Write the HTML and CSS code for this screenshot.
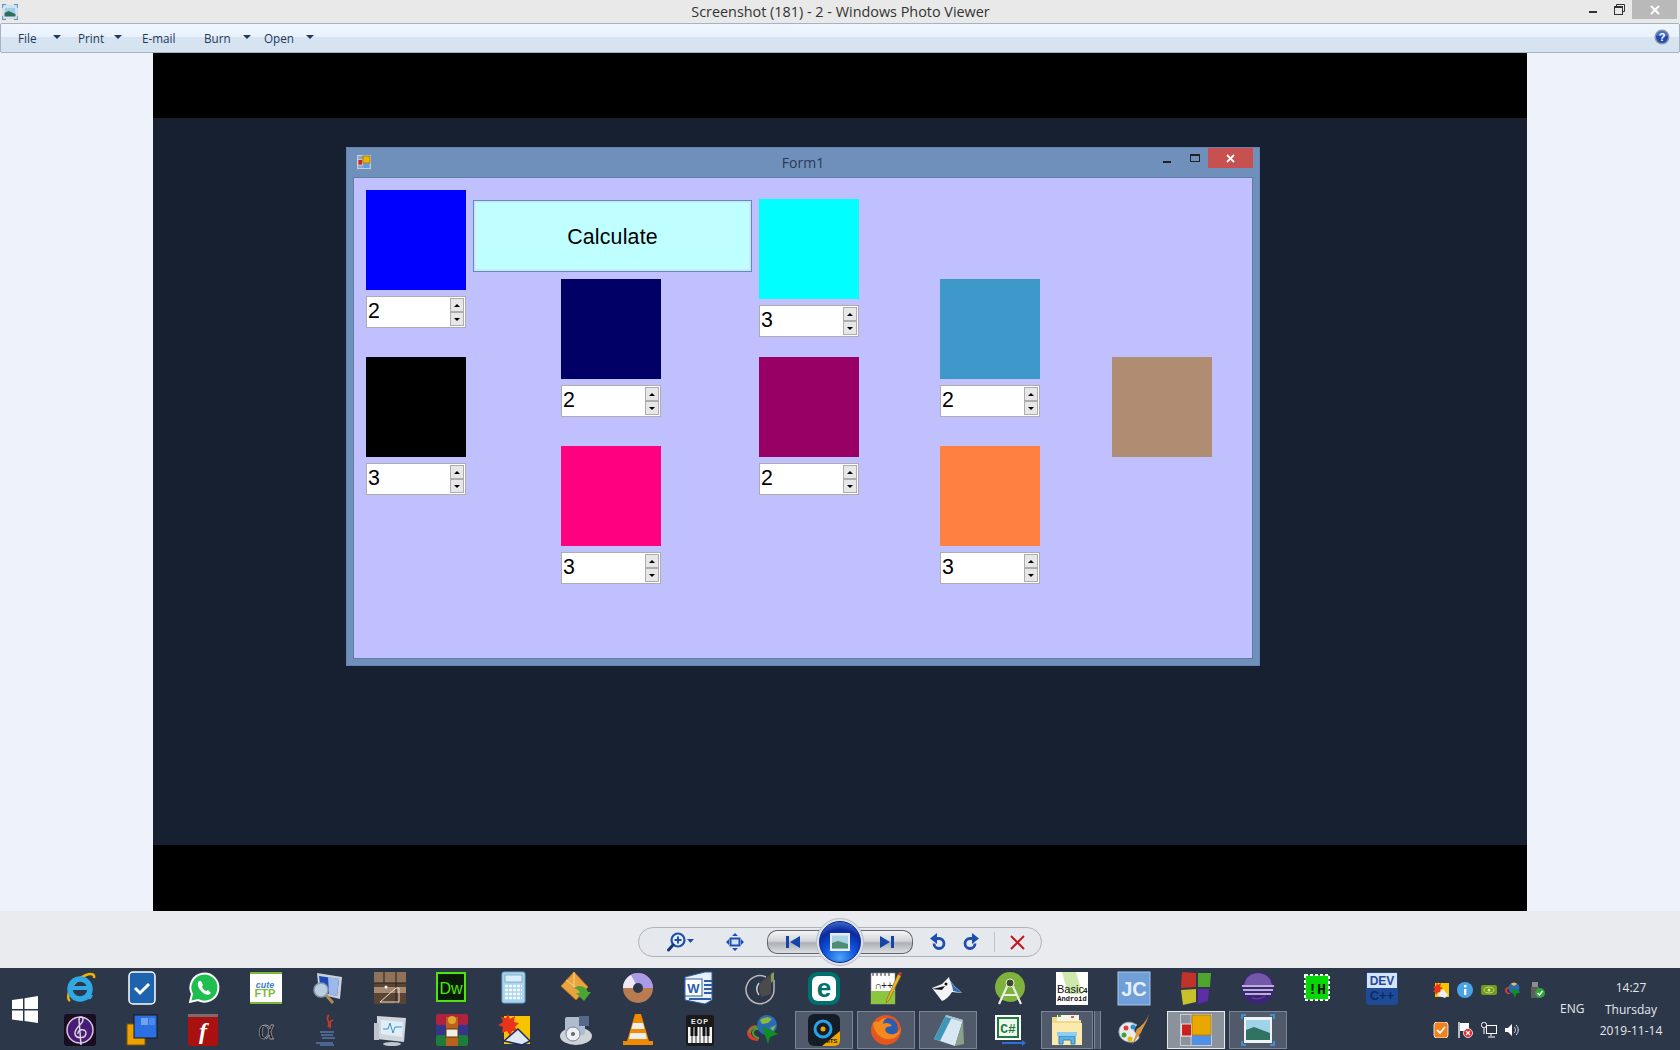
FILE: index.html
```html
<!DOCTYPE html>
<html lang="en">
<head>
<meta charset="utf-8">
<title>Windows Photo Viewer</title>
<link rel="stylesheet" href="styles.css">
</head>
<body>
<div class="titlebar">
  <svg class="app-icon" viewBox="0 0 16 16"><path d="M0 4V0h4v1H1v3zM12 0h4v4h-1V1h-3zM0 12h1v3h3v1H0zM15 12h1v4h-4v-1h3z" fill="#4d93cc"/><rect x="1" y="2" width="14" height="12" fill="#f2f6fa" stroke="#9fb6c9" stroke-width=".6"/><rect x="2.500" y="3.500" width="11" height="9" fill="#9bd0e8"/><path d="M2.500 9l4-2 7 3v2.500h-11z" fill="#2f6d5c"/></svg>
  <div class="window-title">Screenshot (181) - 2 - Windows Photo Viewer</div>
  <div class="caption-buttons">
    <span class="cap cap-min"><i class="min-line"></i></span>
    <span class="cap cap-restore"><svg width="11" height="11" viewBox="0 0 11 11"><path d="M2.500 2.500V.5h8v7H8.500" fill="none" stroke="#333"/><rect x=".5" y="2.500" width="8" height="8" fill="none" stroke="#333"/><path d="M1 3.500h7" stroke="#333"/></svg></span>
    <span class="cap cap-close"><svg width="10" height="10" viewBox="0 0 10 10"><path d="M1 1l8 8M9 1l-8 8" stroke="#fff" stroke-width="2"/></svg></span>
  </div>
</div>

<div class="toolbar">
  <span class="menu menu-file">File<i class="caret"></i></span>
  <span class="menu menu-print">Print<i class="caret"></i></span>
  <span class="menu menu-email">E-mail</span>
  <span class="menu menu-burn">Burn<i class="caret"></i></span>
  <span class="menu menu-open">Open<i class="caret"></i></span>
  <svg class="help" viewBox="0 0 16 16"><circle cx="8" cy="8" r="7.500" fill="#8c95a6"/><circle cx="8" cy="8" r="6" fill="#1f4bb0"/><path d="M2.500 7a5.500 5 0 0 1 11 0z" fill="#5f86d8" opacity=".6"/><text x="8" y="12" text-anchor="middle" class="help-q">?</text></svg>
</div>

<div class="viewer">
  <div class="photo">
    <div class="bar bar-top"></div>
    <div class="desktop">
      <div class="form">
        <div class="form-title">
          <svg class="form-icon" viewBox="0 0 14 14"><rect x=".5" y=".5" width="13" height="13" fill="#8fa6c4" stroke="#c8ccd4"/><rect x="1" y="4.500" width="4.500" height="5.500" fill="#c9281e" stroke="#eee" stroke-width=".6"/><rect x="6" y="1" width="7" height="7" fill="#f0b400" stroke="#7a5a00" stroke-width=".6"/><rect x="6.500" y="9" width="5.500" height="4" fill="#5c9cf0"/></svg>
          <span class="form-name">Form1</span>
          <span class="form-min"></span>
          <span class="form-max"></span>
          <span class="form-close"><svg width="9" height="9" viewBox="0 0 9 9"><path d="M1 1l7 7M8 1L1 8" stroke="#fff" stroke-width="1.800"/></svg></span>
        </div>
        <div class="client">
          <div class="col col-1">
            <div class="widget"><div class="swatch c-blue"></div><div class="spin"><span class="val">2</span><span class="arrows"><b class="up"></b><b class="down"></b></span></div></div>
            <div class="widget gap"><div class="swatch c-black"></div><div class="spin"><span class="val">3</span><span class="arrows"><b class="up"></b><b class="down"></b></span></div></div>
          </div>
          <div class="col col-2">
            <button class="calc" type="button">Calculate</button>
            <div class="widget inset"><div class="swatch c-navy"></div><div class="spin"><span class="val">2</span><span class="arrows"><b class="up"></b><b class="down"></b></span></div></div>
            <div class="widget inset gap"><div class="swatch c-pink"></div><div class="spin"><span class="val">3</span><span class="arrows"><b class="up"></b><b class="down"></b></span></div></div>
          </div>
          <div class="col col-3">
            <div class="widget"><div class="swatch c-cyan"></div><div class="spin"><span class="val">3</span><span class="arrows"><b class="up"></b><b class="down"></b></span></div></div>
            <div class="widget gap-small"><div class="swatch c-purple"></div><div class="spin"><span class="val">2</span><span class="arrows"><b class="up"></b><b class="down"></b></span></div></div>
          </div>
          <div class="col col-4">
            <div class="widget"><div class="swatch c-steel"></div><div class="spin"><span class="val">2</span><span class="arrows"><b class="up"></b><b class="down"></b></span></div></div>
            <div class="widget gap"><div class="swatch c-orange"></div><div class="spin"><span class="val">3</span><span class="arrows"><b class="up"></b><b class="down"></b></span></div></div>
          </div>
          <div class="col col-5">
            <div class="swatch c-brown"></div>
          </div>
        </div>
      </div>
    </div>
    <div class="bar bar-bottom"></div>
  </div>
</div>

<div class="controls">
  <div class="pill">
    <svg class="ctl ctl-zoom" viewBox="0 0 28 22"><circle cx="11" cy="9" r="6.500" fill="#eaf0fa" stroke="#1d4fb0" stroke-width="2.200"/><path d="M7.500 9h7M11 5.500v7" stroke="#1d4fb0" stroke-width="2"/><path d="M6 14l-4.500 5" stroke="#16367e" stroke-width="3" stroke-linecap="round"/><path d="M20 8h7l-3.500 4z" fill="#1d4fb0"/></svg>
    <svg class="ctl ctl-fit" viewBox="0 0 18 18"><rect x="4.500" y="5.500" width="9" height="7" fill="#cfe0f5" stroke="#1d4fb0" stroke-width="2"/><path d="M9 0l3 3H6zM9 18l3-3H6zM0 9l3-3v6zM18 9l-3-3v6z" fill="#1d4fb0"/></svg>
    <div class="nav">
      <div class="nav-btn nav-prev"><svg class="ctl-nav" viewBox="0 0 16 12"><path d="M1 0h3v12H1zM15 0v12L5 6z" fill="#1544a8"/></svg></div>
      <div class="nav-btn nav-next"><svg class="ctl-nav" viewBox="0 0 16 12"><path d="M12 0h3v12h-3zM1 0v12l10-6z" fill="#1544a8"/></svg></div>
      <div class="slideshow"><div class="slide-core"><svg class="slide-img" viewBox="0 0 20 18"><rect width="20" height="18" fill="#e8edf2"/><rect x="2" y="2.500" width="16" height="13" fill="#a7d3e6"/><path d="M2 10l6-2 10 3v4.500H2z" fill="#4f8c72"/></svg></div></div>
    </div>
    <svg class="ctl ctl-undo" viewBox="0 0 16 18"><path d="M4.500 5.500H9a5 5 0 1 1-5 5" fill="none" stroke="#1d4fb0" stroke-width="2.800"/><path d="M7 0v11L0 5.500z" fill="#1d4fb0"/></svg>
    <svg class="ctl ctl-redo" viewBox="0 0 16 18"><path d="M11.500 5.500H7a5 5 0 1 0 5 5" fill="none" stroke="#1d4fb0" stroke-width="2.800"/><path d="M9 0v11l7-5.500z" fill="#1d4fb0"/></svg>
    <i class="sep"></i>
    <svg class="ctl ctl-del" viewBox="0 0 15 15"><path d="M1 1l13 13M14 1L1 14" stroke="#c4161c" stroke-width="2"/></svg>
  </div>
</div>

<div class="taskbar">
  <div class="start"><svg class="win-logo" viewBox="0 0 26 27"><path d="M0 4l11-1.600V13H0zM12.500 2.200L26 0v13H12.500zM0 14.500h11V25L0 23.400zM12.500 14.500H26V27l-13.500-2z" fill="#fff"/></svg></div>
  <div class="launch">
    <div class="cell"><svg class="ico" viewBox="0 0 32 32"><path d="M6 29C1 26 6 10 22 3c5-2 9-1 8 3" fill="none" stroke="#f0b400" stroke-width="2.500"/><circle cx="16" cy="17" r="10" fill="none" stroke="#2ea9e6" stroke-width="5.500"/><path d="M7 16h19" stroke="#2ea9e6" stroke-width="4"/><path d="M20 23h9l-2 4-8 1z" fill="#2ea9e6"/></svg></div>
    <div class="cell"><svg class="ico" viewBox="0 0 32 32"><rect x="3" y="0" width="26" height="32" rx="4" fill="#1e63ad" stroke="#fff" stroke-width="1.500"/><path d="M9 16l5 5 9-9" fill="none" stroke="#fff" stroke-width="3"/></svg></div>
    <div class="cell"><svg class="ico" viewBox="0 0 32 32"><path d="M2 30l2-8a14 14 0 1 1 6 6z" fill="#1fbf4f" stroke="#fff" stroke-width="2"/><path d="M11 9c-3 3 0 8 3 11s7 4 9 1l-3-3-2 1c-2-1-3-2-4-4l1-2-2-4z" fill="#fff"/></svg></div>
    <div class="cell"><svg class="ico" viewBox="0 0 32 32"><rect width="32" height="32" fill="#fff"/><rect width="32" height="2" fill="#7db83d"/><rect y="30" width="32" height="2" fill="#7db83d"/><text x="15" y="16" class="t-cute">cute</text><text x="15" y="25" class="t-ftp">FTP</text></svg></div>
    <div class="cell"><svg class="ico" viewBox="0 0 32 32"><path d="M5 1l25 4-2 22-21-5z" fill="#c9d0d8"/><path d="M7 4l20 3-2 17-16-4z" fill="#1b49b8"/><path d="M16 5l11 2-2 17-8-2z" fill="#9bb8e8"/><path d="M14 23l7 8" stroke="#b08a55" stroke-width="3"/><circle cx="9" cy="18" r="7" fill="#b9cee0" stroke="#8b9aa8" stroke-width="1.500"/></svg></div>
    <div class="cell"><svg class="ico" viewBox="0 0 32 32"><rect width="32" height="32" fill="#5a4534"/><rect y="0" width="32" height="11" fill="#8e735a"/><rect y="15" width="32" height="6" fill="#a68a70"/><path d="M10 0v11M22 0v32M0 11h32" stroke="#2a1f16"/><path d="M6 30l16-14h3v14H6z" fill="none" stroke="#e4dfd8"/><circle cx="12" cy="15" r="1.500" fill="#fff"/></svg></div>
    <div class="cell"><svg class="ico" viewBox="0 0 32 32"><rect x="1" y="1" width="28" height="28" fill="#0a1a08" stroke="#4ee60a" stroke-width="2"/><text x="15" y="22" class="t-dw">Dw</text></svg></div>
    <div class="cell"><svg class="ico" viewBox="0 0 32 32"><rect x="4" y="0" width="23" height="31" rx="2" fill="#a9d4ec" stroke="#6fa8cc"/><rect x="7" y="3" width="17" height="7" fill="#d9eef9" stroke="#5d8fb0" stroke-width=".6"/><path d="M7 14h17M7 18h17M7 22h17M7 26h17" stroke="#f4f9fc" stroke-width="2.500" stroke-dasharray="3 1"/></svg></div>
    <div class="cell"><svg class="ico" viewBox="0 0 32 32"><path d="M14 0l14 15-12 13L1 14z" fill="#e9a43e" stroke="#b9761c"/><path d="M14 0v15M6 8l16 12" stroke="#f6d596"/><path d="M14 16a9 9 0 0 1 14 4h3l-7 9-8-8h4c-1-3-4-4-6-5z" fill="#4aa535"/></svg></div>
    <div class="cell"><svg class="ico" viewBox="0 0 32 32"><circle cx="16" cy="16" r="15" fill="#b87b52"/><path d="M16 1a15 15 0 0 1 15 15H16zM16 16H1A15 15 0 0 1 16 1z" fill="#a99be8"/><path d="M1 16a15 15 0 0 1 8-13l7 13z" fill="#efe9f7"/><circle cx="16" cy="16" r="5" fill="#2c374a"/></svg></div>
    <div class="cell"><svg class="ico" viewBox="0 0 32 32"><path d="M1 5l20-5h7v28l-7 4-20-4z" fill="#e9f0f8" stroke="#2f5da6"/><rect x="1" y="7" width="17" height="17" fill="#fff" stroke="#2f5da6"/><text x="9.500" y="21" class="t-w">W</text><path d="M20 9h8M20 13h8M20 17h8M20 21h8M5 27h22" stroke="#2f5da6" stroke-width="2"/></svg></div>
    <div class="cell"><svg class="ico" viewBox="0 0 32 32"><path d="M20 5a14 14 0 1 0 8 13V8" fill="none" stroke="#b9b9b9" stroke-width="1.500"/><path d="M19 7c-6 2-8 11-3 18l9-3V2z" fill="#4b4b4b"/><path d="M25 2l3-2v8l-3 3z" fill="#7ea05a"/><path d="M13 11c-3 4-3 8 0 12" stroke="#c9c9c9" fill="none" stroke-width="1.500"/></svg></div>
    <div class="cell"><svg class="ico" viewBox="0 0 32 32"><rect x="0" y="0" width="32" height="33" rx="9" fill="#00706f"/><rect x="4" y="4" width="24" height="25" rx="6" fill="#fff"/><text x="16" y="25" class="t-e">e</text></svg></div>
    <div class="cell"><svg class="ico" viewBox="0 0 32 32"><path d="M1 1h24v31H1z" fill="#fff" stroke="#888" stroke-width=".6"/><path d="M1 19h24v13H1z" fill="#8cc63f"/><path d="M3 1v3M7 1v3M11 1v3M15 1v3M19 1v3" stroke="#333"/><text x="5" y="17" class="t-npp">∩++</text><path d="M28 2L17 27l-1 4 3-3L31 4z" fill="#f0b429" stroke="#7a5a12" stroke-width=".6"/><path d="M28 2l3 2 1-3-2-1z" fill="#c0392b"/></svg></div>
    <div class="cell"><svg class="ico" viewBox="0 0 32 32"><path d="M0 16l10-4 7-7c1 6 7 10 13 16l-10-1c-3 5-7 8-10 9z" fill="#f2f4f6"/><path d="M17 5c1 6 6 10 13 16l-9-2c0-5-3-9-4-14z" fill="#2b6fb8"/><path d="M0 17l13-3-3 4z" fill="#15181c"/><circle cx="14" cy="12" r="1.500" fill="#111"/></svg></div>
    <div class="cell"><svg class="ico" viewBox="0 0 32 32"><circle cx="16" cy="15" r="15" fill="#7fb13d"/><path d="M16 8L5 32M16 8l11 24M9 23h14" stroke="#e9efe2" stroke-width="2.200" fill="none"/><circle cx="16" cy="11" r="4" fill="#3a4a2a" stroke="#e9efe2"/></svg></div>
    <div class="cell"><svg class="ico" viewBox="0 0 32 32"><rect width="32" height="33" fill="#fff"/><path d="M6 0h14l6 22H12z" fill="#cfe8ab"/><text x="1" y="21" class="t-b4a">Basic</text><text x="27" y="21" class="t-b4n">4</text><text x="16" y="29" class="t-b4s">Android</text></svg></div>
    <div class="cell"><svg class="ico" viewBox="0 0 32 32"><rect width="32" height="33" fill="#6f9ed8" stroke="#a8c7ec"/><text x="16" y="24" class="t-jc">JC</text></svg></div>
    <div class="cell"><svg class="ico" viewBox="0 0 32 32"><path d="M2 0l14 1v14l-15 1z" fill="#c1322a"/><path d="M18 1l13 0-1 14-12 0z" fill="#4fa52d"/><path d="M1 18l15-1v13L3 33z" fill="#c7c12c"/><path d="M18 17h11l-1 12-10 3z" fill="#5d2ea8"/></svg></div>
    <div class="cell"><svg class="ico" viewBox="0 0 32 32"><circle cx="16" cy="16" r="16" fill="#3e2478"/><path d="M4 7a15 15 0 0 1 24 0l2 6H2z" fill="#7357a8"/><path d="M0 14h32M1 18h30M3 22h26" stroke="#e5e0f0" stroke-width="1.600"/><path d="M10 26c6 2 10 0 13-2" stroke="#6a55a0" fill="none"/></svg></div>
    <div class="cell"><svg class="ico" viewBox="0 0 32 32"><rect x="1" y="3" width="24" height="25" fill="#06d806" stroke="#fff" stroke-width="2" stroke-dasharray="3 2"/><text x="13" y="22" class="t-ih">!H</text></svg></div>
    <div class="cell"><svg class="ico" viewBox="0 0 32 32"><rect width="32" height="33" rx="3" fill="#1f4a96"/><path d="M1 1h30v15H1z" fill="#d8e3f3"/><text x="16" y="13" class="t-dev">DEV</text><text x="16" y="28" class="t-cpp">C++</text></svg></div>

    <div class="cell low"><svg class="ico" viewBox="0 0 32 32"><rect width="32" height="32" rx="3" fill="#1a0c22"/><circle cx="16" cy="16" r="13" fill="#4a1a78" stroke="#cfcad6" stroke-width="1.500"/><path d="M17 31L15 6c0-4 4-4 4 0 0 4-9 8-8 14 1 5 11 5 11-1 0-5-9-4-8 1" fill="none" stroke="#d8d8d8" stroke-width="1.500"/></svg></div>
    <div class="cell low"><svg class="ico" viewBox="0 0 32 32"><rect x="1" y="10" width="18" height="21" fill="#eda100" stroke="#7c5600"/><rect x="8" y="1" width="23" height="23" fill="#2c6fe0" stroke="#15181c" stroke-width="1"/><rect x="15" y="4" width="7" height="7" fill="#6ea2f2"/><rect x="23" y="4" width="6" height="7" fill="#4f88e8"/></svg></div>
    <div class="cell low"><svg class="ico" viewBox="0 0 32 32"><rect width="30" height="32" rx="2" fill="#a8110f"/><rect width="30" height="3" fill="#7d6b6b"/><text x="15" y="25" class="t-f">f</text></svg></div>
    <div class="cell low"><svg class="ico" viewBox="0 0 32 32"><text x="16" y="25" class="t-alpha">α</text></svg></div>
    <div class="cell low"><svg class="ico" viewBox="0 0 32 32"><path d="M17 1c-5 5 3 6-1 12M21 6c-5 2-2 4-3 8" stroke="#c23a2a" stroke-width="1.800" fill="none"/><path d="M8 18h14M9 21h12M10 24h13M4 29h17M8 31h14" stroke="#5877a6" stroke-width="1.300"/></svg></div>
    <div class="cell low"><svg class="ico" viewBox="0 0 32 32"><path d="M3 2l29 2-2 24-27-3z" fill="#cfd5da"/><path d="M7 6l22 2-1 15-21-3z" fill="#dfeef8"/><path d="M9 15h5l2-6 3 10 2-6h7" fill="none" stroke="#3a8ed0"/><ellipse cx="18" cy="30" rx="9" ry="2" fill="#c4c8cc"/><rect x="0" y="9" width="5" height="17" fill="#bfc5ca"/></svg></div>
    <div class="cell low"><svg class="ico" viewBox="0 0 32 32"><rect y="0" width="32" height="11" rx="2" fill="#b0233f"/><rect y="11" width="32" height="10" fill="#36358e"/><rect y="21" width="32" height="11" rx="2" fill="#1d7c3a"/><rect x="10" y="3" width="12" height="29" fill="#b9621c"/><rect x="10" y="15" width="12" height="8" fill="#f2efe6" stroke="#5a3a14"/><circle cx="16" cy="6" r="4" fill="#e0a52c"/></svg></div>
    <div class="cell low"><svg class="ico" viewBox="0 0 32 32"><rect x="6" y="2" width="26" height="28" fill="#f7c400"/><path d="M10 0l2 5 5-3-1 6 5 1-4 4 3 4-6 0-2 5-3-5-5 2 1-6-5-2 5-3-2-5 5 1z" fill="#e9341c"/><path d="M6 27l14-12 12 12-8 4z" fill="#dfe7f5" stroke="#1a2b6b" stroke-width="1.500"/></svg></div>
    <div class="cell low"><svg class="ico" viewBox="0 0 32 32"><ellipse cx="16" cy="22" rx="16" ry="9" fill="#cfd3d8"/><rect x="5" y="3" width="20" height="18" rx="2" fill="#aebcd0"/><circle cx="13" cy="20" r="7" fill="#eef1f4" stroke="#7c8794"/><circle cx="13" cy="20" r="2" fill="#5f6872"/><rect x="19" y="2" width="10" height="10" fill="#56698a"/></svg></div>
    <div class="cell low"><svg class="ico" viewBox="0 0 32 32"><path d="M13 0h6l8 27h4v4H1v-4h4z" fill="#f08a00"/><path d="M11 9h10l1.500 6h-13zM8.500 19h15l1.500 6H7z" fill="#eee"/></svg></div>
    <div class="cell low"><svg class="ico" viewBox="0 0 32 32"><rect x="2" y="1" width="28" height="31" rx="3" fill="#1a1a1a"/><text x="16" y="10" class="t-eop">EOP</text><path d="M4 13h24v16H4z" fill="#f3f3f3"/><path d="M8 13v16M12 13v16M16 13v16M20 13v16M24 13v16" stroke="#333"/><path d="M6.500 13h3v9h-3zM10.500 13h3v9h-3zM18.500 13h3v9h-3zM22.500 13h3v9h-3z" fill="#111"/></svg></div>
    <div class="cell low"><svg class="ico" viewBox="0 0 32 32"><path d="M1 19a9 9 0 0 1 9-8l2 3a6 6 0 0 0-7 5c0 3 3 5 7 6v2C6 27 1 24 1 19z" fill="#e23a2e"/><path d="M3 19a7 7 0 0 1 7-6l2 2a4 4 0 0 0-5 4c0 2 2 4 5 5v-1" fill="none" stroke="#4aa02c" stroke-width="2"/><circle cx="21" cy="11" r="10" fill="#2a6ab8"/><path d="M14 6c4-3 8-4 12-1l-4 4-6 1zM24 14l6-3-3 6z" fill="#8cb83c"/><path d="M16 12l16 8-8 3-2 7z" fill="#0f8f1f"/></svg></div>
    <div class="cell low task"><div class="task-btn"><svg class="ico" viewBox="0 0 32 32"><rect width="32" height="32" rx="6" fill="#161c26"/><circle cx="15" cy="15" r="8" fill="none" stroke="#29a3e8" stroke-width="3"/><circle cx="15" cy="15" r="2.500" fill="#f0a500"/><path d="M32 17v10a5 5 0 0 1-5 5H14z" fill="#f0a500"/><text x="23" y="29" class="t-mts">MTS</text></svg></div></div>
    <div class="cell low task"><div class="task-btn"><svg class="ico" viewBox="0 0 32 32"><circle cx="16" cy="16" r="15" fill="#e6551e"/><circle cx="18" cy="14" r="10" fill="#2a5db0"/><path d="M3 9c1 12 11 19 21 15 4-2 7-6 7-10-2 5-7 7-11 6-5-1-6-5-3-7l5-1c-2-3-6-4-9-2 0-3 2-5 4-6-5 0-7 2-8 4-2-1-4 0-6 1z" fill="#f28a1e"/></svg></div></div>
    <div class="cell low task"><div class="task-btn"><svg class="ico" viewBox="0 0 32 32"><path d="M14 1l17 5-8 26L2 25z" fill="#d8e8f2"/><path d="M2 25L14 1l6 2L8 27z" fill="#3f96b8"/><path d="M14 1l17 5-.5 2L13.500 3z" fill="#a9c1cc"/><path d="M31 6l1 24-9 2z" fill="#8aa08a"/></svg></div></div>
    <div class="cell low"><svg class="ico" viewBox="0 0 32 32"><rect x="1" y="1" width="26" height="25" fill="#fff"/><rect x="3" y="3" width="22" height="21" fill="#1f7c3f"/><rect x="5" y="5" width="18" height="17" fill="#eef7ee"/><text x="14" y="19" class="t-cs">C#</text><path d="M8 28h20v-2l4 3-4 3v-2H8z" fill="#2f70d8"/></svg></div>
    <div class="cell low task"><div class="task-btn task-stack"><svg class="ico" viewBox="0 0 32 32"><path d="M1 3h11l2 3h16v25H1z" fill="#f1d98a"/><path d="M1 9h30v22H1z" fill="#fbe9ad"/><rect x="6" y="1" width="22" height="6" fill="#f8f4e6"/><rect x="7" y="1" width="3" height="2" fill="#3fa53f"/><rect x="20" y="2" width="3" height="2" fill="#e25c4a"/><path d="M8 30v-8h16v8h-4v-4h-8v4z" fill="#5ab4e8" stroke="#2f7fb8"/><rect x="6" y="18" width="20" height="4" fill="#8ccff2"/></svg></div></div>
    <div class="cell low"><svg class="ico" viewBox="0 0 32 32"><path d="M15 9c-8-3-15 3-14 10 1 8 11 11 17 8 5-3 3-7 0-8-4-2-1-7 1-8z" fill="#e8ecef" stroke="#9aa4ad"/><circle cx="8" cy="14" r="2.500" fill="#e03c31"/><circle cx="15" cy="13" r="2.500" fill="#2c8fd8"/><circle cx="6" cy="21" r="2.500" fill="#3ba53b"/><circle cx="12" cy="25" r="2.500" fill="#f0b400"/><path d="M31 0c-2 6-7 12-12 15l-2 4 1 1-4 11 7-10c2-2 3-4 3-5 3-5 6-11 7-16z" fill="#d8963c"/></svg></div>
    <div class="cell low task"><div class="task-btn task-active"><svg class="ico" viewBox="0 0 32 32"><rect x=".5" y=".5" width="31" height="31" fill="none" stroke="#c9ccd1" stroke-width="1"/><path d="M0 11h11M11 0v32M0 22h11M22 22v10" stroke="#c9ccd1"/><rect x="1.500" y="10" width="10" height="12" fill="#c9211e" stroke="#e4e4e4"/><rect x="12" y="1" width="19" height="20" fill="#e9a800" stroke="#8c6b00" stroke-width=".6"/><rect x="12" y="22" width="19" height="9" fill="#4f90e8"/></svg></div></div>
    <div class="cell low task"><div class="task-btn"><svg class="ico" viewBox="0 0 32 32"><path d="M0 5V1h4M28 1h4v4M0 27v4h4M28 31h4v-4" fill="none" stroke="#3f8fd4" stroke-width="2"/><rect x="2" y="3" width="28" height="26" fill="#eff3f5"/><rect x="4" y="6" width="24" height="20" fill="#9fd3ea"/><path d="M4 16l8-3 16 6v7H4z" fill="#2f7360"/></svg></div></div>
  </div>

  <div class="tray">
    <div class="tray-icons">
      <svg class="tico" viewBox="0 0 16 16"><rect x="2" y="1" width="14" height="14" fill="#f7c400"/><path d="M4 0l1 3 3-2-1 4 3 1-3 2 1 3-3-1-2 3-1-3-2 0 2-3-2-2 3-1z" fill="#e9341c"/><path d="M4 13l6-6 5 6-3 3z" fill="#eef"/></svg>
      <svg class="tico" viewBox="0 0 16 16"><circle cx="8" cy="8" r="8" fill="#4aa3e6"/><rect x="7" y="7" width="2.400" height="6" fill="#fff"/><rect x="7" y="3" width="2.400" height="2.400" fill="#fff"/></svg>
      <svg class="tico" viewBox="0 0 16 16"><rect y="3" width="16" height="10" rx="2" fill="#6f9a1f"/><ellipse cx="8" cy="8" rx="5" ry="3" fill="none" stroke="#c6e06a"/><circle cx="8" cy="8" r="1.500" fill="#d8ec88"/></svg>
      <svg class="tico" viewBox="0 0 16 16"><circle cx="9" cy="6" r="5.500" fill="#2a6ab8"/><path d="M0 9a4 4 0 0 1 4-4l1 1a3 3 0 0 0-3 3 3 3 0 0 0 3 2v1a4 4 0 0 1-5-3z" fill="#e23a2e"/><path d="M6 6l10 4-5 2-1 4z" fill="#0f8f1f"/><path d="M6 2c2-2 5-1 6 0l-3 2z" fill="#f0c040"/></svg>
      <svg class="tico" viewBox="0 0 16 16"><rect x="3" y="0" width="6" height="5" fill="#8c8c8c"/><rect x="2" y="5" width="8" height="11" fill="#5d5d5d"/><circle cx="11" cy="11" r="5" fill="#2ea63c"/><path d="M8.500 11l2 2 3-4" fill="none" stroke="#fff" stroke-width="1.400"/></svg>
    </div>
    <div class="tray-icons second">
      <svg class="tico" viewBox="0 0 16 16"><rect x="1" width="14" height="16" rx="3" fill="#f0821e" stroke="#fff" stroke-width=".8"/><path d="M4 8l3 3 5-6" fill="none" stroke="#fff" stroke-width="1.800"/></svg>
      <svg class="tico" viewBox="0 0 16 16"><path d="M2 0v16" stroke="#fff" stroke-width="1.300"/><path d="M3 1h9v8H3z" fill="#fff"/><circle cx="11" cy="11" r="4.500" fill="#e0252b" stroke="#fff" stroke-width=".8"/><path d="M9 9l4 4M13 9l-4 4" stroke="#fff" stroke-width="1.300"/></svg>
      <svg class="tico" viewBox="0 0 16 16"><rect x="5.500" y="3.500" width="10" height="8" fill="none" stroke="#fff"/><path d="M10 12v2M7 15h7" stroke="#fff"/><rect x=".5" y=".5" width="5" height="5" rx="2" fill="#2c374a" stroke="#fff"/><path d="M3 6v6" stroke="#fff"/></svg>
      <svg class="tico" viewBox="0 0 16 16"><path d="M0 6h3l4-4v12l-4-4H0z" fill="#fff"/><path d="M9 5c2 2 2 4 0 6M11 3c3 3 3 7 0 10" fill="none" stroke="#dfe3e8"/></svg>
    </div>
  </div>
  <div class="lang">ENG</div>
  <div class="clock"><span>14:27</span><span>Thursday</span><span>2019-11-14</span></div>
</div>
</body>
</html>
```
FILE: styles.css
```css
* { box-sizing: border-box; }
html, body { margin: 0; padding: 0; }
body {
  width: 1680px;
  height: 1050px;
  overflow: hidden;
  display: flex;
  flex-direction: column;
  font-family: "Open Sans", "Liberation Sans", sans-serif;
  background: #edf2fb;
}

/* Photo Viewer title bar */
.titlebar {
  height: 23px;
  background: #e9e9e9;
  display: flex;
  align-items: center;
  flex: none;
}
.app-icon { width: 16px; height: 16px; margin-left: 2px; flex: none; }
.window-title {
  flex: 1;
  text-align: center;
  font-size: 14.4px;
  color: #333;
  padding-left: 83px;
  line-height: 22px;
}
.caption-buttons { display: flex; align-self: flex-start; margin-right: 3px; }
.cap { height: 19px; display: flex; align-items: center; justify-content: center; }
.cap-min { width: 26px; }
.min-line { width: 8px; height: 2px; background: #333; margin-top: 5px; }
.cap-restore { width: 26px; }
.cap-close { width: 45px; background: #b9b9b9; }

/* Toolbar */
.toolbar {
  height: 30px;
  flex: none;
  border: 1px solid #a7b1bf;
  border-radius: 2px;
  background: linear-gradient(#f0f6fe 0, #e8f1fc 45%, #d6e4f2 46%, #d6e4f2 100%);
  display: flex;
  align-items: center;
  font-size: 11.7px;
  color: #1e395b;
}
.menu { display: flex; align-items: center; flex: none; }
.menu-file { margin-left: 17px; width: 60px; }
.menu-print { width: 64px; }
.menu-email { width: 62px; }
.menu-burn { width: 60px; }
.menu-open { width: 60px; }
.caret {
  width: 0;
  height: 0;
  border-left: 4px solid transparent;
  border-right: 4px solid transparent;
  border-top: 4px solid #1e395b;
  margin-left: 12px;
  margin-top: -2px;
}
.menu-file .caret { margin-left: 16px; }
.menu-print .caret { margin-left: 10px; }
.help { width: 16px; height: 16px; margin-left: auto; margin-right: 9px; margin-top: -2px; }
.help-q { font: bold 11px "Liberation Sans", sans-serif; fill: #fff; }

/* Viewer */
.viewer { flex: none; height: 858px; display: flex; justify-content: center; background: #edf2fb; }
.photo { width: 1374px; display: flex; flex-direction: column; background: #000; }
.bar-top { height: 65px; background: #000; }
.bar-bottom { height: 66px; background: #000; }
.desktop { flex: 1; background: #162030; padding: 29px 0 0 193px; }

/* Form1 window */
.form {
  width: 914px;
  height: 519px;
  background: #6f90ba;
  border: 1px solid #6583ad;
  display: flex;
  flex-direction: column;
}
.form-title {
  height: 29px;
  display: flex;
  align-items: flex-start;
  position: relative;
  flex: none;
}
.form-icon { width: 14px; height: 14px; margin: 7px 0 0 10px; flex: none; }
.form-name {
  position: absolute;
  left: 0;
  right: 0;
  top: 5px;
  text-align: center;
  font-size: 14px;
  line-height: 19px;
  color: #2a3a52;
  pointer-events: none;
}
.form-min { width: 8px; height: 2px; background: #222; margin: 13px 0 0 auto; }
.form-max {
  width: 10px;
  height: 8px;
  border: 1px solid #222;
  border-top-width: 2px;
  margin: 6px 0 0 19px;
}
.form-close {
  width: 45px;
  height: 20px;
  margin: 0 6px 0 8px;
  background: #c75050;
  display: flex;
  align-items: center;
  justify-content: center;
}
.client {
  flex: 1;
  margin: 0 6px 6px 6px;
  background: #c0c0ff;
  border: 1px solid #5f7ca6;
  display: flex;
  align-items: flex-start;
}
.col { flex: none; width: 100px; display: flex; flex-direction: column; }
.col-1 { margin-left: 12px; padding-top: 12px; }
.col-2 { margin-left: 7px; width: 279px; padding-top: 22px; }
.col-3 { margin-left: 7px; padding-top: 21px; }
.col-4 { margin-left: 81px; padding-top: 101px; }
.col-5 { margin-left: 72px; padding-top: 179px; }
.widget { width: 100px; display: flex; flex-direction: column; gap: 6px; }
.inset { margin-left: 88px; margin-top: 7px; }
.gap { margin-top: 29px; }
.gap-small { margin-top: 20px; }
.swatch { width: 100px; height: 100px; }
.c-blue { background: #0000ff; }
.c-black { background: #000; }
.c-navy { background: #000066; }
.c-pink { background: #ff0080; }
.c-cyan { background: #00ffff; }
.c-purple { background: #990066; }
.c-steel { background: #3e98c9; }
.c-orange { background: #ff8040; }
.c-brown { background: #b08c72; }
.spin {
  height: 32px;
  width: 100px;
  background: #fff;
  border: 1px solid #adadad;
  display: flex;
  justify-content: space-between;
}
.val {
  font: 21.33px/28px "Liberation Sans", Arial, sans-serif;
  color: #000;
  padding-left: 1px;
}
.arrows { display: flex; flex-direction: column; width: 14px; margin: 1px 1px 0 0; }
.arrows b {
  height: 14px;
  background: #e7e7e7;
  border: 1px solid #adadad;
  display: flex;
  align-items: center;
  justify-content: center;
}
.arrows b::after {
  content: "";
  border-left: 3px solid transparent;
  border-right: 3px solid transparent;
}
.up::after { border-bottom: 3px solid #000; }
.down::after { border-top: 3px solid #000; }
.calc {
  width: 279px;
  height: 72px;
  margin: 0;
  padding: 2px 0 0;
  background: #bfffff;
  border: 1px solid #4a90e2;
  box-shadow: inset 0 0 0 1.500px #dedede;
  font: 21.33px "Liberation Sans", Arial, sans-serif;
  letter-spacing: .2px;
  color: #000;
}

/* Bottom controls */
.controls {
  height: 57px;
  flex: none;
  background: #e9ebee;
  display: flex;
  justify-content: center;
  padding-top: 16px;
}
.pill {
  width: 404px;
  height: 30px;
  background: #e5e9ee;
  border: 1px solid #aeb4bd;
  border-radius: 15px;
  display: flex;
  align-items: center;
}
.ctl { flex: none; display: block; }
.ctl-zoom { width: 28px; height: 22px; margin-left: 28px; }
.ctl-fit { width: 18px; height: 18px; margin-left: 31px; }
.nav {
  width: 146px;
  height: 24px;
  margin-left: 23px;
  position: relative;
  display: flex;
  flex: none;
}
.nav-btn {
  flex: 1;
  background: linear-gradient(#f4f5f6 0, #d2d5d8 45%, #adb1b5 55%, #dcdfe2 100%);
  border: 1px solid #62666c;
  display: flex;
  align-items: center;
}
.nav-prev { border-radius: 10px 0 0 10px; border-right: 0; padding-left: 17px; }
.nav-next { border-radius: 0 10px 10px 0; border-left: 0; justify-content: flex-end; padding-right: 17px; }
.ctl-nav { width: 16px; height: 12px; }
.slideshow {
  position: absolute;
  left: 49px;
  top: -12px;
  width: 48px;
  height: 48px;
  border-radius: 50%;
  background: #dfe3e8;
  border: 1px solid #b5bcc6;
  display: flex;
  align-items: center;
  justify-content: center;
}
.slide-core {
  width: 42px;
  height: 42px;
  border-radius: 50%;
  background: radial-gradient(circle at 50% 90%, #4aa4f6 0, #0e50dc 40%, #0a2a9e 68%, #5f8fe4 100%);
  border: 1px solid #0a2a8e;
  display: flex;
  align-items: center;
  justify-content: center;
}
.slide-img { width: 20px; height: 18px; }
.ctl-undo { width: 16px; height: 18px; margin-left: 17px; }
.ctl-redo { width: 16px; height: 18px; margin-left: 17px; }
.sep { width: 1px; height: 20px; background: #bfc4ca; margin-left: 15px; flex: none; }
.ctl-del { width: 15px; height: 15px; margin-left: 15px; }

/* Taskbar */
.taskbar {
  height: 82px;
  flex: none;
  background: #2c374a;
  display: flex;
  color: #e6e8ea;
  font-size: 12px;
}
.start { width: 49px; flex: none; display: flex; align-items: center; justify-content: center; }
.win-logo { width: 26px; height: 27px; }
.launch {
  width: 1364px;
  flex: none;
  display: grid;
  grid-template-columns: repeat(22, 62px);
  grid-template-rows: 43px 39px;
}
.cell { display: flex; align-items: flex-start; justify-content: center; padding-top: 4px; }
.cell.low { padding-top: 3px; }
.ico { width: 32px; height: 32px; overflow: visible; flex: none; }
.cell.task { padding-top: 0; }
.task-btn {
  width: 58px;
  height: 38px;
  background: #505a6a;
  border: 1px solid #7b8492;
  display: flex;
  align-items: flex-start;
  justify-content: center;
  padding-top: 2px;
  position: relative;
}
.task-stack { width: 52px; margin-left: -10px; }
.task-stack::after {
  content: "";
  position: absolute;
  left: 52px;
  top: -1px;
  width: 5px;
  height: 38px;
  border-left: 1px solid #7b8492;
  border-right: 1px solid #7b8492;
  background: #505a6a;
}
.task-active { background: #8c929b; border-color: #e8eaec; }

/* SVG labels */
.t-cute { font: italic bold 9px "Liberation Sans", sans-serif; fill: #3f7fc9; text-anchor: middle; }
.t-ftp { font: bold 11px "Liberation Sans", sans-serif; fill: #7db83d; text-anchor: middle; }
.t-dw { font: 16px "Liberation Sans", sans-serif; fill: #4ee60a; text-anchor: middle; }
.t-w { font: bold 13px "Liberation Sans", sans-serif; fill: #2f5da6; text-anchor: middle; }
.t-e { font: bold 26px "Liberation Sans", sans-serif; fill: #00706f; text-anchor: middle; }
.t-npp { font: 10px "Liberation Mono", monospace; fill: #222; }
.t-b4a { font: 11px "Liberation Sans Narrow", "Liberation Sans", sans-serif; fill: #111; }
.t-b4n { font: bold 8px "Liberation Sans", sans-serif; fill: #111; }
.t-b4s { font: bold 7px "Liberation Mono", monospace; fill: #111; text-anchor: middle; }
.t-jc { font: bold 20px "Liberation Sans", sans-serif; fill: #e6f0fb; text-anchor: middle; }
.t-ih { font: bold 15px "Liberation Mono", monospace; fill: #111; text-anchor: middle; }
.t-dev { font: bold 12px "Liberation Sans", sans-serif; fill: #1f4a96; text-anchor: middle; }
.t-cpp { font: bold 13px "Liberation Sans", sans-serif; fill: #0a2a6b; text-anchor: middle; }
.t-f { font: italic bold 24px "Liberation Serif", serif; fill: #fff; text-anchor: middle; }
.t-alpha { font: 30px "Liberation Serif", serif; fill: #0c0c0c; stroke: #fff; stroke-width: .4px; text-anchor: middle; }
.t-eop { font: bold 7px "Liberation Sans", sans-serif; fill: #eee; text-anchor: middle; letter-spacing: 1px; }
.t-mts { font: bold 6px "Liberation Sans", sans-serif; fill: #222; text-anchor: middle; }
.t-cs { font: bold 13px "Liberation Mono", monospace; fill: #1f7c3f; text-anchor: middle; }

/* Tray */
.tray { width: 147px; flex: none; display: flex; flex-direction: column; padding: 14px 0 0 20px; }
.tray-icons { display: flex; gap: 8px; height: 16px; }
.tray-icons.second { margin-top: 24px; }
.tico { width: 16px; height: 16px; flex: none; }
.lang { width: 36px; flex: none; padding-top: 32px; line-height: 18px; }
.clock {
  flex: 1;
  display: flex;
  flex-direction: column;
  align-items: center;
  padding: 11px 14px 0 0;
  line-height: 18px;
  gap: 3.5px;
}
```
